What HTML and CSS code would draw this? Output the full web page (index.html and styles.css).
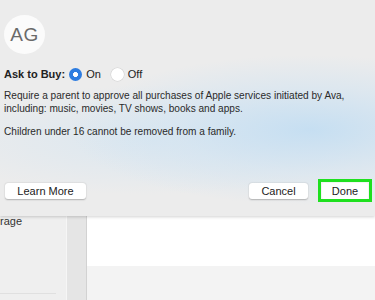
FILE: index.html
```html
<!DOCTYPE html>
<html>
<head>
<meta charset="utf-8">
<link rel="stylesheet" href="styles.css">
</head>
<body>
<div class="page">
  <div class="dialog">
    <div class="avatar">AG</div>
    <div class="ask-row">
      <span class="ask-label">Ask to Buy:</span>
      <span class="radio radio-on"></span><span class="opt">On</span>
      <span class="radio radio-off"></span><span class="opt">Off</span>
    </div>
    <p class="desc">Require a parent to approve all purchases of Apple services initiated by Ava,<br>including: music, movies, TV shows, books and apps.</p>
    <p class="desc note">Children under 16 cannot be removed from a family.</p>
    <div class="buttons">
      <button class="btn learn">Learn More</button>
      <div class="spacer"></div>
      <button class="btn cancel">Cancel</button>
      <div class="done-wrap"><button class="btn done">Done</button></div>
    </div>
  </div>
  <div class="behind">
    <div class="sidebar">
      <div class="side-label">rage</div>
      <div class="side-line"></div>
    </div>
    <div class="column"></div>
    <div class="main">
      <div class="main-top"></div>
      <div class="main-bottom"></div>
    </div>
  </div>
</div>
</body>
</html>
```

FILE: styles.css
```css
* { box-sizing: border-box; }
html, body { margin: 0; padding: 0; }
body {
  width: 375px;
  height: 300px;
  overflow: hidden;
  font-family: "Liberation Sans", Arial, sans-serif;
  color: #2a2a2a;
  background: #f2f2f2;
}
.page {
  position: relative;
  width: 375px;
  height: 300px;
  display: flex;
  flex-direction: column;
}
.dialog {
  position: relative;
  z-index: 2;
  height: 216px;
  flex: none;
  padding: 14px 3px 0 4px;
  background:
    radial-gradient(ellipse 240px 75px at 310px 130px, rgba(196, 222, 242, 0.95), rgba(208, 227, 242, 0.55) 55%, rgba(236, 236, 236, 0) 100%),
    radial-gradient(ellipse 220px 55px at 150px 140px, rgba(212, 229, 242, 0.7), rgba(236,236,236,0) 100%),
    #ececec;
  box-shadow: 0 1px 3px rgba(0,0,0,0.18);
}
.avatar {
  width: 41px;
  height: 39px;
  margin-top: 1px;
  border-radius: 50%;
  background: #fbfbfb;
  color: #6a6a6a;
  font-size: 19px;
  display: flex;
  align-items: center;
  justify-content: center;
  letter-spacing: 0.5px;
}
.ask-row {
  display: flex;
  align-items: center;
  margin-top: 13px;
  height: 14px;
  font-size: 11px;
}
.ask-label {
  font-weight: bold;
  color: #222;
  margin-right: 4px;
}
.radio {
  width: 13px;
  height: 13px;
  border-radius: 50%;
  display: inline-block;
  flex: none;
}
.radio-on {
  background: radial-gradient(circle, #fff 0 2.2px, #2d7ce0 2.8px);
}
.radio-off {
  background: #fff;
  box-shadow: 0 0 0 0.5px #cfcfcf;
  margin-left: 10px;
}
.opt {
  margin-left: 4px;
  color: #222;
}
.desc {
  margin: 8px 0 0 0;
  font-size: 10.1px;
  line-height: 13px;
  color: #2a2a2a;
}
.desc.note {
  margin-top: 10px;
}
.buttons {
  display: flex;
  align-items: center;
  margin-top: 41px;
  padding-left: 1px;
}
.spacer { flex: 1; }
.btn {
  font-family: "Liberation Sans", Arial, sans-serif;
  font-size: 11px;
  color: #222;
  background: #fff;
  border: none;
  border-radius: 3px;
  box-shadow: 0 0.5px 1.5px rgba(0,0,0,0.25);
  height: 16px;
  padding: 0;
  line-height: 16px;
}
.learn { width: 81px; }
.cancel { width: 59px; margin-right: 10px; }
.done-wrap {
  border: 3px solid #1fe01f;
  width: 54px;
  height: 23px;
  padding: 1px 1px;
  display: flex;
  align-items: center;
  justify-content: center;
  background: #f4f4f4;
}
.done {
  width: 46px;
  box-shadow: none;
  border-radius: 2px;
}
.behind {
  flex: 1;
  display: flex;
}
.sidebar {
  width: 66px;
  background: #efefef;
  position: relative;
  flex: none;
}
.side-label {
  font-size: 11px;
  color: #333;
  margin-top: 0;
  line-height: 11px;
}
.side-line {
  position: absolute;
  left: 0;
  top: 77px;
  width: 56px;
  height: 1px;
  background: #e0e0e0;
}
.column {
  width: 21px;
  flex: none;
  background: #e5e5e5;
  border-left: 1px solid #f6f6f6;
  border-right: 1px solid #d2d2d2;
}
.main {
  flex: 1;
  display: flex;
  flex-direction: column;
}
.main-top {
  height: 50px;
  background: #ffffff;
}
.main-bottom {
  flex: 1;
  background: #f3f3f3;
}
```
